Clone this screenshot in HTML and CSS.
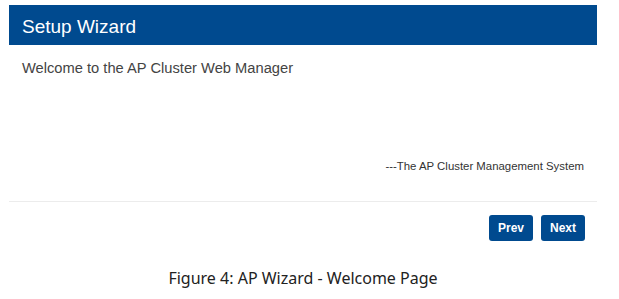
FILE: index.html
```html
<!DOCTYPE html>
<html>
    <head>
        <title>Setup Wizard</title>
        <link rel="stylesheet" href="styles.css">
    </head>
    <body>
        <div class="wizard">
            <div class="wizard-head">Setup Wizard</div>
            <div class="wizard-body">
                <div class="welcome">Welcome to the AP Cluster Web Manager</div>
                <div class="signature">---The AP Cluster Management System</div>
            </div>
            <div class="wizard-foot">
                <div class="btn">Prev</div>
                <div class="btn">Next</div>
            </div>
        </div>
        <div class="caption">Figure 4: AP Wizard - Welcome Page</div>
    </body>
</html>
```

FILE: styles.css
```css
body {
    margin: 0;
    padding-top: 5px;
    background: #fff;
    font-family: "Liberation Sans", Arial, sans-serif;
}
.wizard {
    width: 588px;
    margin-left: 9px;
}
.wizard-head {
    background: #004a8f;
    color: #fff;
    height: 40px;
    line-height: 44px;
    font-size: 19px;
    padding-left: 13px;
}
.wizard-body {
    height: 156px;
    padding: 0 13px;
    border-bottom: 1px solid #ececec;
    display: flex;
    flex-direction: column;
}
.welcome {
    color: #444;
    font-size: 14.7px;
    margin-top: 15px;
}
.signature {
    color: #333;
    font-size: 11.4px;
    text-align: right;
    margin-top: auto;
    margin-bottom: 29px;
}
.wizard-foot {
    display: flex;
    justify-content: flex-end;
    gap: 8px;
    padding: 13px 12px 0 0;
}
.btn {
    width: 44px;
    height: 26px;
    line-height: 26px;
    text-align: center;
    background: #004a8f;
    color: #fff;
    font-size: 12px;
    font-weight: bold;
    border-radius: 3px;
    cursor: pointer;
    user-select: none;
}
.caption {
    width: 588px;
    margin: 26px 0 0 9px;
    text-align: center;
    font-family: "Noto Sans", "Open Sans", sans-serif;
    font-size: 16px;
    color: #222;
}
```
